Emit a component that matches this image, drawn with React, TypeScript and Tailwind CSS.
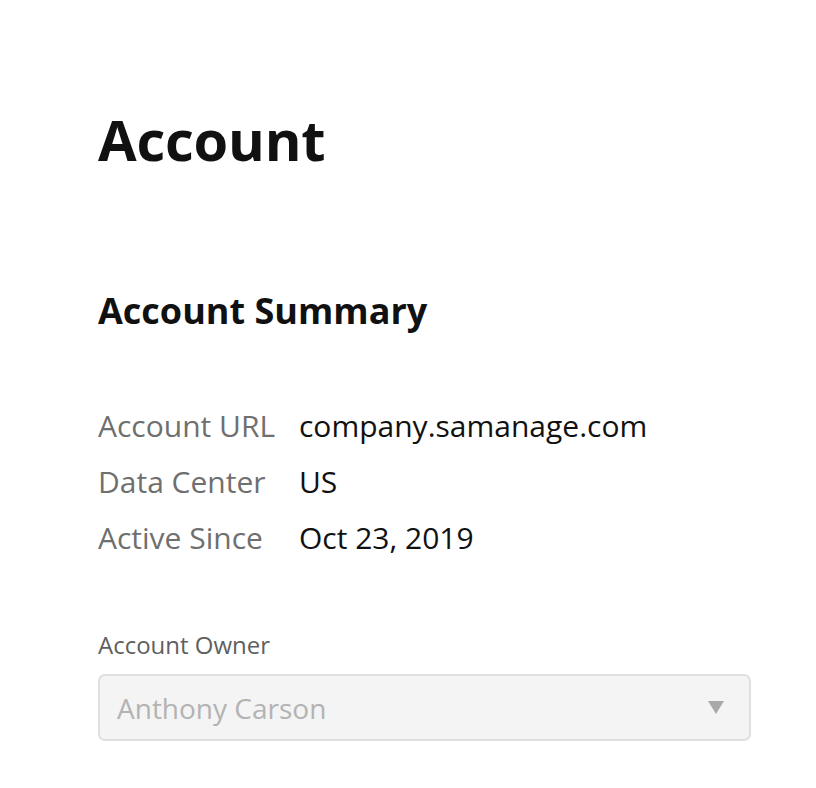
const summary = [
  { label: "Account URL", value: "company.samanage.com" },
  { label: "Data Center", value: "US" },
  { label: "Active Since", value: "Oct 23, 2019" },
];

export default function App() {
  return (
    <div className="min-h-screen bg-white font-['Open_Sans',sans-serif] text-[#111]">
      <div className="pl-[98px] pr-[65px] pt-[103px]">
        <h1 className="text-[56px] font-bold leading-[72px] tracking-[-0.2px]">Account</h1>

        <h2 className="mt-[112px] text-[36px] font-bold leading-[48px]">Account Summary</h2>

        <div className="mt-[70px] grid grid-cols-[201px_1fr] gap-y-[14px] text-[30px] leading-[42px]">
          {summary.map((row) => (
            <div key={row.label} className="contents">
              <span className="text-[#6f6f6f]">{row.label}</span>
              <span>{row.value}</span>
            </div>
          ))}
        </div>

        <label className="mt-[71px] block text-[24px] leading-[30px] text-[#5f5f5f]">Account Owner</label>
        <div className="mt-[14px] flex h-[67px] items-center justify-between rounded-[7px] border-2 border-[#e0e0e0] bg-[#f4f4f4] pl-[17px] pr-[25px]">
          <span className="text-[28px] text-[#b3b3b3]">Anthony Carson</span>
          <svg width="16" height="13" viewBox="0 0 16 13">
            <path d="M0 0H16L8 13Z" fill="#a9a9a9" />
          </svg>
        </div>
      </div>
    </div>
  );
}
